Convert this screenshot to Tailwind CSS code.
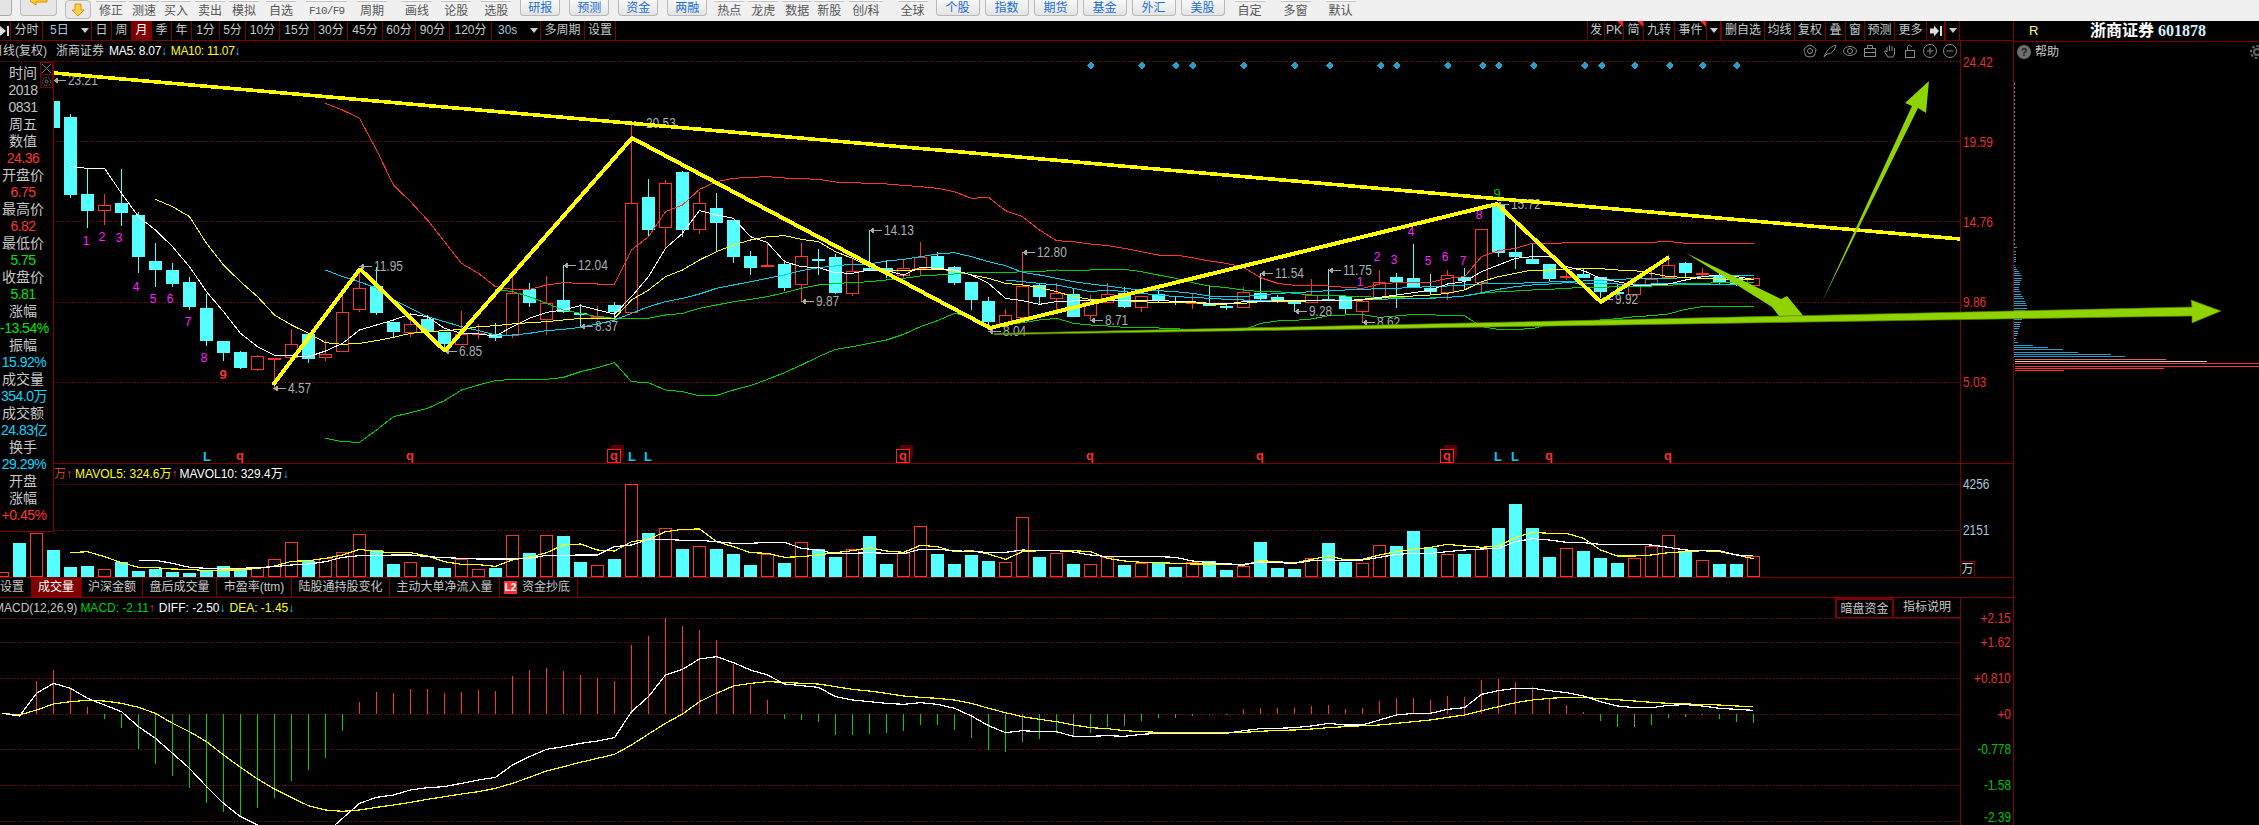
<!DOCTYPE html>
<html lang="zh-CN">
<head>
<meta charset="UTF-8">
<title>浙商证券 601878</title>
<script src="https://cdn.jsdelivr.net/npm/@tailwindcss/browser@4"></script>
</head>
<body class="relative w-[2259px] h-[825px] overflow-hidden bg-black text-[12px] text-[#c8c8c8] font-['Liberation_Sans','Noto_Sans_CJK_SC',sans-serif]">

<!-- top toolbar -->
<div class="flex h-[21px] bg-[#f0f0f0] text-[#555] leading-[23px] overflow-hidden [&>span]:relative [&>span]:before:absolute [&>span]:before:top-0 [&>span]:before:left-[-3px] [&>span]:before:right-[-3px] [&>span]:before:h-[2px] [&>span]:before:bg-[#fafafa] [&>span]:before:border-b [&>span]:before:border-[#c4c4c4]">
  <div class="w-[12px] h-[16px] shrink-0 rounded-br bg-[#e4e4e4] border-r border-b border-[#aaa]"></div>
  <div class="ml-[8px] w-[37px] h-[16px] shrink-0 flex justify-center rounded-b bg-[#e6e6e6] border border-t-0 border-[#bbb]">
    <svg width="18" height="6"><path d="M0 1 L6 5 V2 H17 V-2 H0Z" fill="#ffc92e" stroke="#d98a00"/></svg>
  </div>
  <div class="ml-[8px] w-[26px] h-[19px] shrink-0 flex items-center justify-center rounded bg-[#e9e9e9] border border-[#bbb]">
    <svg width="14" height="14"><path d="M4 1 H10 V7 H13 L7 13 L1 7 H4Z" fill="#ffd24a" stroke="#e09000"/></svg>
  </div>
  <span class="ml-[8px]">修正</span><span class="ml-[9px]">测速</span><span class="ml-[8px]">买入</span><span class="ml-[10px]">卖出</span><span class="ml-[10px]">模拟</span><span class="ml-[13px]">自选</span>
  <span class="ml-[16px] w-[35px] text-[11px] whitespace-nowrap font-['Liberation_Mono',monospace] tracking-[-0.7px]">F10/F9</span>
  <span class="ml-[16px]">周期</span><span class="ml-[21px]">画线</span><span class="ml-[15px]">论股</span><span class="ml-[16px]">选股</span>
  <div class="ml-[12px] w-[40px] h-[16px] text-center leading-[17px] shrink-0 rounded-b bg-gradient-to-b from-[#f8f8f8] to-[#e4e4e4] border border-t-0 border-[#b8b8b8] text-[#1a6fd6]">研报</div>
  <div class="ml-[9px] w-[40px] h-[16px] text-center leading-[17px] shrink-0 rounded-b bg-gradient-to-b from-[#f8f8f8] to-[#e4e4e4] border border-t-0 border-[#b8b8b8] text-[#1a6fd6]">预测</div>
  <div class="ml-[9px] w-[40px] h-[16px] text-center leading-[17px] shrink-0 rounded-b bg-gradient-to-b from-[#f8f8f8] to-[#e4e4e4] border border-t-0 border-[#b8b8b8] text-[#1a6fd6]">资金</div>
  <div class="ml-[9px] w-[40px] h-[16px] text-center leading-[17px] shrink-0 rounded-b bg-gradient-to-b from-[#f8f8f8] to-[#e4e4e4] border border-t-0 border-[#b8b8b8] text-[#1a6fd6]">两融</div>
  <span class="ml-[10px]">热点</span><span class="ml-[10px]">龙虎</span><span class="ml-[10px]">数据</span><span class="ml-[8px]">新股</span><span class="ml-[11px] whitespace-nowrap">创/科</span><span class="ml-[21px]">全球</span>
  <div class="ml-[11px] w-[44px] h-[16px] text-center leading-[17px] shrink-0 rounded-b bg-gradient-to-b from-[#f8f8f8] to-[#e4e4e4] border border-t-0 border-[#b8b8b8] text-[#1a6fd6]">个股</div>
  <div class="ml-[5px] w-[44px] h-[16px] text-center leading-[17px] shrink-0 rounded-b bg-gradient-to-b from-[#f8f8f8] to-[#e4e4e4] border border-t-0 border-[#b8b8b8] text-[#1a6fd6]">指数</div>
  <div class="ml-[5px] w-[44px] h-[16px] text-center leading-[17px] shrink-0 rounded-b bg-gradient-to-b from-[#f8f8f8] to-[#e4e4e4] border border-t-0 border-[#b8b8b8] text-[#1a6fd6]">期货</div>
  <div class="ml-[5px] w-[44px] h-[16px] text-center leading-[17px] shrink-0 rounded-b bg-gradient-to-b from-[#f8f8f8] to-[#e4e4e4] border border-t-0 border-[#b8b8b8] text-[#1a6fd6]">基金</div>
  <div class="ml-[5px] w-[44px] h-[16px] text-center leading-[17px] shrink-0 rounded-b bg-gradient-to-b from-[#f8f8f8] to-[#e4e4e4] border border-t-0 border-[#b8b8b8] text-[#1a6fd6]">外汇</div>
  <div class="ml-[5px] w-[44px] h-[16px] text-center leading-[17px] shrink-0 rounded-b bg-gradient-to-b from-[#f8f8f8] to-[#e4e4e4] border border-t-0 border-[#b8b8b8] text-[#1a6fd6]">美股</div>
  <span class="ml-[13px]">自定</span><span class="ml-[22px]">多窗</span><span class="ml-[21px]">默认</span>
</div>

<div class="flex h-[804px]">
  <!-- chart column -->
  <div class="relative flex flex-col w-[2014px] shrink-0 border-r border-[#800000]">

    <!-- period tabs -->
    <div class="flex justify-between h-[20px] shrink-0 border-b border-[#800000] leading-[19px]">
      <div class="flex">
        <div class="w-[11px] flex items-center border-r border-[#800000]"><svg width="10" height="12"><path d="M0 1 L6 6 L0 11Z" fill="#ddd"/><rect x="7" y="1" width="2" height="10" fill="#ddd"/></svg></div>
        <div class="w-[32px] text-center border-r border-[#800000]">分时</div>
        <div class="w-[49px] flex items-center justify-between pl-[7px] pr-[2px] border-r border-[#800000] text-[#a8c8e0]">5日<svg width="8" height="5"><path d="M0 0 H8 L4 5Z" fill="#ccc"/></svg></div>
        <div class="w-[20px] text-center border-r border-[#800000]">日</div>
        <div class="w-[20px] text-center border-r border-[#800000]">周</div>
        <div class="w-[20px] text-center border-r border-[#800000] bg-[#800000] text-white">月</div>
        <div class="w-[20px] text-center border-r border-[#800000]">季</div>
        <div class="w-[20px] text-center border-r border-[#800000]">年</div>
        <div class="w-[28px] text-center border-r border-[#800000]">1分</div>
        <div class="w-[26px] text-center border-r border-[#800000]">5分</div>
        <div class="w-[34px] text-center border-r border-[#800000]">10分</div>
        <div class="w-[35px] text-center border-r border-[#800000]">15分</div>
        <div class="w-[33px] text-center border-r border-[#800000]">30分</div>
        <div class="w-[35px] text-center border-r border-[#800000]">45分</div>
        <div class="w-[33px] text-center border-r border-[#800000]">60分</div>
        <div class="w-[34px] text-center border-r border-[#800000]">90分</div>
        <div class="w-[42px] text-center border-r border-[#800000]">120分</div>
        <div class="w-[49px] flex items-center justify-between pl-[6px] pr-[2px] border-r border-[#800000] text-[#a8c8e0]">30s<svg width="8" height="5"><path d="M0 0 H8 L4 5Z" fill="#ccc"/></svg></div>
        <div class="w-[44px] text-center border-r border-[#800000]">多周期</div>
        <div class="w-[31px] text-center border-r border-[#800000]">设置</div>
      </div>
      <div class="flex pr-[53px] shrink-0">
        <div class="w-[18px] text-center border-x border-[#800000]">发</div>
        <div class="relative w-[19px] text-center border-r border-[#800000]">PK<span class="absolute top-0 right-0 w-0 h-0 border-t-[6px] border-l-[6px] border-t-[#ff2020] border-l-transparent"></span></div>
        <div class="relative w-[20px] text-center border-r border-[#800000]">简<span class="absolute top-0 right-0 w-0 h-0 border-t-[6px] border-l-[6px] border-t-[#ff2020] border-l-transparent"></span></div>
        <div class="w-[31px] text-center border-r border-[#800000]">九转</div>
        <div class="relative w-[32px] text-center border-r border-[#800000]">事件<span class="absolute top-0 right-0 w-0 h-0 border-t-[6px] border-l-[6px] border-t-[#ff2020] border-l-transparent"></span></div>
        <div class="w-[15px] flex items-center justify-center border-r-2 border-[#800000]"><svg width="8" height="5"><path d="M0 0 H8 L4 5Z" fill="#ccc"/></svg></div>
        <div class="w-[43px] text-center border-r border-[#800000] whitespace-nowrap">删自选</div>
        <div class="w-[30px] text-center border-r border-[#800000]">均线</div>
        <div class="w-[31px] text-center border-r border-[#800000]">复权</div>
        <div class="w-[20px] text-center border-r border-[#800000]">叠</div>
        <div class="w-[19px] text-center border-r border-[#800000]">窗</div>
        <div class="w-[30px] text-center border-r border-[#800000]">预测</div>
        <div class="w-[32px] text-center border-r border-[#800000]">更多</div>
        <div class="w-[18px] flex items-center justify-center border-r border-[#800000]"><svg width="12" height="12"><path d="M0 3.5 H4 V0.5 L9 6 L4 11.5 V8.5 H0Z" fill="#ddd"/><rect x="10" y="1" width="2" height="10" fill="#ddd"/></svg></div>
        <div class="w-[15px] flex items-center justify-center border-x border-[#800000]"><svg width="8" height="5"><path d="M0 0 H8 L4 5Z" fill="#ccc"/></svg></div>
      </div>
    </div>

    <!-- price pane -->
    <div class="relative h-[423px] shrink-0 border-b border-[#800000]">
      <svg id="price" class="absolute top-0 left-0" width="2013" height="422" viewBox="0 41 2013 422" font-size="13"></svg>
      <div class="absolute top-0 bottom-0 left-[1960px] w-px bg-[#800000]"></div>
      <div class="relative flex items-center justify-between w-[1960px] h-[20px] whitespace-nowrap">
        <div class="flex overflow-hidden">
          <span class="ml-[-9px]">月线(复权)</span>
          <span class="ml-[9px]">浙商证券</span>
          <span class="ml-[5px] text-white tracking-[-0.3px]">MA5: 8.07<span class="text-[#00c8ff]">↓</span></span>
          <span class="ml-[4px] text-[#ffff00] tracking-[-0.3px]">MA10: 11.07<span class="text-[#00c8ff]">↓</span></span>
        </div>
        <div class="flex gap-[6px] pr-[3px]">
          <svg width="14" height="14" fill="none" stroke="#8a8a8a"><circle cx="7" cy="7" r="2.5"/><path d="M7 1 L10 2.5 L13 5 L12.5 8.5 L11 12 L7 13 L3 12 L1.5 8.5 L1 5 L4 2.5Z"/></svg>
          <svg width="14" height="14" fill="none" stroke="#8a8a8a"><path d="M1 13 C3 8 6 3 13 1 C12 6 9 10 4 10 L1 13"/></svg>
          <svg width="14" height="14" fill="none" stroke="#8a8a8a"><ellipse cx="7" cy="7" rx="6.5" ry="4.5"/><circle cx="7" cy="7" r="2.5"/></svg>
          <svg width="14" height="14" fill="none" stroke="#8a8a8a"><rect x="1.5" y="4.5" width="11" height="8"/><path d="M4.5 4.5 V1.5 H9.5 V4.5 M1.5 8.5 H12.5"/></svg>
          <svg width="14" height="14" fill="none" stroke="#8a8a8a"><path d="M4 8 V3 M6.5 7 V1 M9 7 V2 M11.5 8 V4 M4 8 L2 6.5 L1.5 8 L5 13 H10 L11.5 10 V8"/></svg>
          <svg width="14" height="14" fill="none" stroke="#8a8a8a"><rect x="2.5" y="6.5" width="9" height="7"/><path d="M4.5 6.5 V3 C4.5 0.5 8.5 0.5 8.5 3"/></svg>
          <svg width="14" height="14" fill="none" stroke="#8a8a8a"><circle cx="7" cy="7" r="6.5"/><path d="M3.5 7 H10.5 M7 3.5 V10.5"/></svg>
          <svg width="14" height="14" fill="none" stroke="#8a8a8a"><circle cx="7" cy="7" r="6.5"/><path d="M3.5 7 H10.5"/></svg>
        </div>
      </div>
    </div>

    <!-- volume pane -->
    <div class="relative h-[114px] shrink-0 border-b border-[#800000]">
      <svg id="vol" class="absolute top-0 left-0" width="2013" height="113" viewBox="0 464 2013 113" font-size="13"></svg>
      <div class="absolute top-0 bottom-0 left-[1960px] w-px bg-[#800000]"></div>
      <div class="absolute bottom-0 left-[1960px] w-[15px] h-[16px] leading-[15px] text-center border border-b-0 border-[#800000] bg-black">万</div>
      <div class="relative flex h-[19px] items-center pl-[54px] whitespace-nowrap">
        <span class="text-[#d04020]">万<span class="text-[#ff3232]">↑</span></span>
        <span class="ml-[3px] text-[#ffff00]">MAVOL5: 324.6万<span class="text-[#ff3232]">↑</span></span>
        <span class="ml-[2px] text-white">MAVOL10: 329.4万<span class="text-[#00c8ff]">↓</span></span>
      </div>
    </div>

    <!-- indicator tabs -->
    <div class="flex h-[20px] shrink-0 border-b border-[#800000] leading-[19px] whitespace-nowrap">
      <div class="w-[31px] text-right pr-[7px] overflow-hidden">设置</div>
      <div class="w-[51px] text-center bg-[#800000] text-white border-r border-[#800000]">成交量</div>
      <div class="w-[61px] text-center border-r border-[#800000]">沪深金额</div>
      <div class="w-[74px] text-center border-r border-[#800000]">盘后成交量</div>
      <div class="w-[75px] text-center border-r border-[#800000]">市盈率(ttm)</div>
      <div class="w-[98px] text-center border-r border-[#800000]">陆股通持股变化</div>
      <div class="w-[110px] text-center border-r border-[#800000]">主动大单净流入量</div>
      <div class="w-[78px] flex items-center pl-[4px] gap-[5px] border-r border-[#800000]"><span class="w-[13px] h-[13px] leading-[13px] text-center text-[10px] bg-[#ff3030] text-white font-bold">L2</span>资金抄底</div>
    </div>

    <!-- macd pane -->
    <div class="relative flex-1">
      <svg id="macd" class="absolute top-0 left-0" width="2013" height="227" viewBox="0 598 2013 227" font-size="13"></svg>
      <div class="absolute top-0 bottom-0 left-[1960px] w-px bg-[#800000]"></div>
      <div class="relative flex items-center justify-between w-[1960px] h-[20px] whitespace-nowrap overflow-hidden">
        <div class="flex">
          <span class="ml-[-6px] text-[#c8c8c8]">MACD(12,26,9)</span>
          <span class="ml-[3px] text-[#00d000]">MACD: -2.11<span class="text-[#ff3232]">↑</span></span>
          <span class="ml-[4px] text-white">DIFF: -2.50<span class="text-[#00c8ff]">↓</span></span>
          <span class="ml-[4px] text-[#ffff00]">DEA: -1.45<span class="text-[#00c8ff]">↓</span></span>
        </div>
        <div class="flex h-[20px] leading-[19px]">
          <div class="w-[59px] text-center border-2 border-b border-[#800000]">暗盘资金</div>
          <div class="w-[66px] text-center border-b border-[#800000]">指标说明</div>
        </div>
      </div>
    </div>

    <!-- quote panel over the chart -->
    <div class="absolute top-[41px] left-0 w-[54px] h-[470px] pt-[3px] bg-black border-r border-b border-[#800000] leading-[17px] text-center whitespace-nowrap text-[14px]">
      <div class="w-[46px]">时间</div>
      <div class="w-[46px] tracking-[-0.5px] text-[#c0c0c0]">2018</div>
      <div class="w-[46px] tracking-[-0.5px] text-[#c0c0c0]">0831</div>
      <div class="w-[46px]">周五</div>
      <div class="w-[46px]">数值</div>
      <div class="w-[46px] tracking-[-0.5px] text-[#ff3232]">24.36</div>
      <div class="w-[46px]">开盘价</div>
      <div class="w-[46px] tracking-[-0.5px] text-[#ff3232]">6.75</div>
      <div class="w-[46px]">最高价</div>
      <div class="w-[46px] tracking-[-0.5px] text-[#ff3232]">6.82</div>
      <div class="w-[46px]">最低价</div>
      <div class="w-[46px] tracking-[-0.5px] text-[#00e600]">5.75</div>
      <div class="w-[46px]">收盘价</div>
      <div class="w-[46px] tracking-[-0.5px] text-[#00e600]">5.81</div>
      <div class="w-[46px]">涨幅</div>
      <div class="w-[48px] tracking-[-0.5px] text-[#00e600]">-13.54%</div>
      <div class="w-[46px]">振幅</div>
      <div class="w-[48px] tracking-[-0.5px] text-[#00d8ff]">15.92%</div>
      <div class="w-[46px]">成交量</div>
      <div class="w-[48px] tracking-[-0.5px] text-[#00d8ff]">354.0万</div>
      <div class="w-[46px]">成交额</div>
      <div class="w-[48px] tracking-[-0.5px] text-[#00d8ff]">24.83亿</div>
      <div class="w-[46px]">换手</div>
      <div class="w-[48px] tracking-[-0.5px] text-[#00d8ff]">29.29%</div>
      <div class="w-[46px]">开盘</div>
      <div class="w-[46px]">涨幅</div>
      <div class="w-[48px] tracking-[-0.5px] text-[#ff3232]">+0.45%</div>
      <div class="absolute top-0 right-0 flex flex-col">
        <div class="w-[13px] h-[13px] flex items-center justify-center border border-[#800000]"><svg width="9" height="9"><path d="M0 0 L9 9 M9 0 L0 9" stroke="#777"/></svg></div>
        <div class="w-[13px] h-[13px] flex items-center justify-center border border-t-0 border-[#800000]"><svg width="9" height="9" fill="none" stroke="#777"><circle cx="4.5" cy="4.5" r="1.5"/><circle cx="4.5" cy="4.5" r="4" stroke-dasharray="1.5 1"/></svg></div>
      </div>
    </div>
  </div>

  <!-- right panel -->
  <div class="relative flex-1 min-w-0 overflow-hidden">
    <div class="flex items-center h-[21px] border-b border-[#800000] whitespace-nowrap">
      <span class="ml-[15px] w-[61px] text-[#ffff80] text-[13px]">R</span>
      <span class="text-white font-bold text-[16px] leading-[20px] font-['Liberation_Serif','Noto_Sans_CJK_SC',serif]">浙商证券 <span class="text-[#d8f0ff]">601878</span></span>
    </div>
    <div class="flex items-center justify-between h-[20px] pl-[3px] pr-0">
      <div class="flex items-center gap-[4px]">
        <span class="w-[14px] h-[14px] rounded-full bg-[#6e6e6e] text-[#222] text-[11px] leading-[14px] text-center font-bold">?</span>
        帮助
      </div>
      <svg class="mr-[-6px]" width="16" height="16" fill="none" stroke="#666" stroke-width="2"><circle cx="8" cy="8" r="3"/><circle cx="8" cy="8" r="6" stroke-dasharray="2.5 2"/></svg>
    </div>
    <svg id="depth" class="absolute top-0 left-0" width="245" height="804" viewBox="2014 21 245 804"></svg>
  </div>
</div>

<!-- hand-drawn lines on top of the whole window -->
<svg class="absolute top-0 left-0 pointer-events-none" width="2259" height="825" viewBox="0 0 2259 825" fill="none">
  <path d="M54 73 L1960 239" stroke="#ffff00" stroke-width="3.6" shape-rendering="crispEdges"/>
  <path d="M273 385 L360 269 L445 351 L632 138 L990 328 L1497 204 L1601 302 L1669 257" stroke="#ffff00" stroke-width="4" stroke-linejoin="bevel" shape-rendering="crispEdges"/>
  <path d="M1686 253 L1781 299 L1787 296 L1806 319 L1779 316 L1772 307Z" fill="#8fd400"/>
  <path d="M994 333.5 L2192 307 L2191 300 L2221 311 L2192 323 L2192 316 L994 334.7Z" fill="#8fd400" stroke="#557f00" stroke-width="0.7"/>
  <path d="M1822 302 L1918 108 L1926 113 L1929 81 L1905 103 L1912 106Z" fill="#8fd400"/>
</svg>

<script>
  // x position of candle i
  const X = i => Math.floor(70.4 + 17 * i) + 0.5;
  const cyan = '#55ffff', red = '#ff3232', grid = '#a00000';

  // zoom readings: value v at offset off means page y = off + v / 3
  const S = (start, off, ys) => ys.map((v, k) => [X(start + k), off + v / 3]);
  const poly = (pts, color, w = 1) =>
    `<polyline points="${pts.map(p => p.join(',')).join(' ')}" fill="none" stroke="${color}" stroke-width="${w}"/>`;
  const dots = (y, x0 = 0) => `<line x1="${x0}" y1="${y + .5}" x2="1960" y2="${y + .5}" stroke="${grid}" stroke-dasharray="1 2"/>`;
  const txt = (x, y, s, fill, extra = '') => `<text x="${x}" y="${y}" fill="${fill}" dominant-baseline="central" ${extra}>${s}</text>`;
  // the terminal's numbers are tall and narrow: 14px squeezed to 85% width
  const numWidth = s => [...s].reduce((a, c) => a + (/\d/.test(c) ? 7.8 : c == '+' ? 8.2 : 4.2), 0) * 0.85;
  const num = (x, y, s, fill) =>
    txt(0, 0, s, fill, `font-size="14" transform="translate(${x} ${y}) scale(.85 1)"`);

  // [kind, top, bottom, wickTop, wickBottom], from i = -1
  const candles = [
    'c,101,128,101,128','c,117,195,114,198','c,194,211,168,228','r,205,210,194,225','c,203,213,169,226','c,215,257,212,273',
    'c,261,270,243,287','c,270,284,263,287','c,282,307,277,310','c,308,341,294,346','c,341,353,341,361','c,352,368,351,369',
    'r,356,369,355,371','r,358,359,358,390','r,344,357,329,357','c,334,359,334,363','r,354,357,340,361','r,312,351,290,351',
    'r,288,309,273,312','c,286,313,267,315','c,322,332,322,338','r,324,332,317,337','c,319,332,315,332','c,332,344,332,351',
    'r,334,344,311,344','r,333,334,324,339','c,334,338,323,341',
    'r,293,335,277,338','c,289,303,283,307','r,303,319,276,335','c,300,312,265,313','c,313,315,304,328','r,316,318,306,320',
    'c,305,312,302,318','r,203,312,125,312','c,197,230,179,237','r,183,227,180,248','c,172,230,171,237','r,203,229,192,234',
    'c,208,223,193,251','c,220,257,220,263','c,256,268,251,275','r,265,266,243,266','c,264,288,260,291','r,256,284,243,301',
    'c,259,260,249,275','c,257,293,254,294','r,271,293,259,296','c,268,271,230,271','c,268,272,261,278','r,268,275,260,278',
    'r,257,268,242,276','c,256,270,252,270','c,267,283,266,285','c,282,300,282,310','c,301,322,297,330','r,315,323,309,323',
    'r,286,317,252,317','c,285,297,283,304','r,293,298,283,313','c,294,317,288,317','r,302,315,295,320',
    'r,294,302,283,303','c,293,307,287,308','r,296,307,296,312','c,294,300,289,303','c,301,303,297,305','r,302,303,294,309',
    'c,303,306,286,306','c,306,308,304,310','r,292,307,287,307','c,293,299,274,300','c,297,302,295,303','c,302,303,302,312',
    'r,295,302,279,302','c,299,301,269,301','c,296,309,296,315','r,301,311,300,323','r,282,299,270,300','c,277,282,273,308',
    'c,278,287,244,288','c,288,292,274,295','r,275,292,270,300','c,277,281,268,290','r,229,282,229,292','c,204,253,203,257',
    'c,252,257,224,269','c,259,264,244,264','c,264,279,264,282','r,276,277,270,280','c,274,278,269,278','c,277,292,277,298',
    'c,292,293,283,295','r,286,294,282,294','r,279,285,270,287','r,265,277,255,278','c,263,273,262,277','r,273,274,268,277',
    'c,275,282,273,284','c,278,284,278,286','r,278,285,277,285'
  ].map(s => s.split(','));

  let p = '';
  [61, 141, 221, 302, 382].forEach(y => p += dots(y));
  candles.forEach((c, k) => {
    const x = X(k - 1), col = c[0] == 'c' ? cyan : red;
    const [t, b, wt, wb] = c.slice(1).map(Number);
    p += `<line x1="${x}" y1="${wt}" x2="${x}" y2="${wb}" stroke="${col}"/>`;
    if (b - t <= 2) p += `<rect x="${x - 6.5}" y="${t}" width="13" height="2" fill="${col}"/>`;
    else if (c[0] == 'c') p += `<rect x="${x - 6.5}" y="${t}" width="13" height="${b - t}" fill="${col}"/>`;
    else p += `<rect x="${x - 6}" y="${t + .5}" width="12" height="${b - t}" fill="#000" stroke="${col}"/>`;
  });

  // moving averages and bands
  p += poly([...S(15, 60, [130,150,175,270,375,425,480,545,610,640,680]),
    ...S(26, 100, [568,568,555,548,550,552,552,450,410,335,315,268,245,235,232,230,234,236,238,246,248,250,252,256,260,265,275,295,292,332,350,390,422,425,432]),
    ...S(61, 180, [197,205,215,225,225,233,243,250,262,293,310,316,316,318,322,325,312,308,308,307,295,290,230,212,205,190,192,188,188,188,188,188,187,184,190,190,190,190,190])], red);
  p += poly([...S(15, 60, [1135,1145,1147,1110,1070,1058,1045,1022,990,975,962]),
    ...S(26, 100, [838,838,838,832,815,803,788,845,848,870,875,888,886,870,857,838,818,795,770,748,740,730,720,703,680,662,640,650,682,675,668,660,655,670,675]),
    ...S(61, 180, [438,442,442,444,446,450,452,452,450,430,423,421,417,407,405,404,412,408,403,404,407,407,440,448,448,446,432,430,428,420,416,410,407,402,388,380,380,380,380])], '#00d000');
  p += poly([...S(25, 100, [568,575,590,610,630,640,650,655,655,655,645,640,625,615,605,598,590,578,565,555,550,548,545,540,535,528,525,522,518,518,518,515,515,510,512,510]),
    ...S(61, 180, [268,268,275,285,295,308,318,323,330,335,335,340,345,345,348,350,352,353,355,354,352,348,340,335,333,330,328,325,322,322,320,318,318,316,312,310,308,308,308])], '#00d000');
  p += poly([...S(15, 60, [630,650,665,685,720,745,770,785,800,812,825]),
    ...S(26, 100, [705,700,692,688,682,672,660,640,620,605,595,582,565,555,545,535,525,512,503,498,492,492,483,478,470,462,458,470,485,497,517,525,535,545,552]),
    ...S(61, 180, [318,325,330,332,335,340,348,350,350,345,340,338,335,332,330,328,326,325,322,320,318,315,312,310,310,308,306,305,303,302,298,296,296,295,293,290,287,286,286])], '#00d0f0');
  p += poly([...S(55, 100, [540,545,550,555,565,575]),
    ...S(61, 180, [330,335,340,345,350,352,355,358,360,360,360,360,360,360,360,360,358,356,355,355,352,348,338,328,320,315,312,308,310,310,312,312,312,310,312,312,312,314,316])], '#00d0f0');
  p += poly([...S(5, 60, [418,440,470,550,615,665,710,765,795,820,848,853,850,842,832,820,815,812,808,800,797]),
    ...S(26, 100, [672,668,665,660,655,655,655,600,570,530,510,480,455,435,420,410,407,418,425,455,475,500,512,512,508,508,512,525,535,550,555,562,575,590,598]),
    ...S(61, 180, [360,362,365,368,368,368,372,372,370,365,365,365,362,362,362,360,355,348,348,345,340,330,305,290,280,270,270,268,265,266,270,272,280,290,292,295,298,298,300])], '#ffff00');
  p += poly([...S(0, 60, [320,325,325,400,470,510,560,620,695,755,820,860,886,887,890,873,850,810,795,780,762,770,805,820,822,828]),
    ...S(26, 100, [680,655,637,630,617,630,642,590,530,445,400,332,345,355,410,428,485,500,503,518,520,510,512,525,502,505,510,525,550,595,602,613,605,603,600]),
    ...S(61, 180, [360,362,362,360,365,365,370,372,365,365,362,362,362,362,362,358,352,345,338,330,312,305,275,255,235,230,230,260,272,295,305,316,315,312,300,290,285,290,298])], '#ffffff');

  // high / low price tags with arrows
  [[54,80,'23.21'],[274,388,'4.57'],[360,266,'11.95'],[445,351,'6.85'],[632,123,'20.53'],[564,265,'12.04'],[581,326,'8.37'],
   [870,230,'14.13'],[802,301,'9.87'],[1023,252,'12.80'],[989,331,'8.04'],[1091,320,'8.71'],[1261,273,'11.54'],[1329,270,'11.75'],
   [1295,311,'9.28'],[1363,322,'8.62'],[1497,204,'15.72'],[1601,299,'9.92']].forEach(([x, y, s]) => {
    p += `<path d="M${x} ${y + .5} H${x + 12} M${x} ${y + .5} L${x + 3} ${y - 1.5} V${y + 2.5}Z" stroke="#a8a8a8" fill="#a8a8a8"/>`;
    p += num(x + 14, y, s, '#a8aeb4');
  });

  // nine-turn counts
  [[86,241,'1'],[102,237,'2'],[119,238,'3'],[136,287,'4'],[153,299,'5'],[170,299,'6'],[188,322,'7'],[204,358,'8'],
   [1360,282,'1'],[1377,257,'2'],[1394,260,'3'],[1411,232,'4'],[1428,261,'5'],[1445,257,'6'],[1463,261,'7'],[1479,215,'8']]
    .forEach(([x, y, s]) => p += txt(x, y, s, '#ff20ff', 'text-anchor="middle" font-size="12"'));
  p += txt(223, 374, '9', '#ff3232', 'text-anchor="middle" font-weight="bold"');
  p += txt(1497, 193, '9', '#00c000', 'text-anchor="middle"');

  // L / q signals along the bottom of the pane
  [207,632,648,1498,1515].forEach(x => p += txt(x, 456, 'L', '#00c8f0', 'text-anchor="middle" font-weight="bold"'));
  [240,410,1090,1260,1549,1668].forEach(x => p += txt(x, 455, 'q', '#f03030', 'text-anchor="middle" font-weight="bold"'));
  [614,903,1447].forEach(x => {
    p += `<rect x="${x - 3}" y="445" width="13" height="13" fill="#5a0000"/><rect x="${x - 6.5}" y="449.5" width="13" height="13" fill="#000" stroke="#ff2020"/>`;
    p += txt(x, 455, 'q', '#f03030', 'text-anchor="middle" font-weight="bold"');
  });

  // event diamonds
  [1091,1142,1176,1193,1244,1295,1330,1381,1397,1448,1483,1499,1534,1585,1602,1635,1670,1703,1737]
    .forEach(x => p += `<path d="M${x} 61 L${x + 3.5} 65.5 L${x} 70 L${x - 3.5} 65.5Z" fill="#2a9cc8"/>`);

  // price axis
  [[62,'24.42'],[142,'19.59'],[222,'14.76'],[302,'9.86'],[382,'5.03']].forEach(([y, s]) => p += num(1963, y, s, '#e03030'));
  document.getElementById('price').innerHTML = `<g shape-rendering="crispEdges">${p}</g>`;

  // volume pane: negative = red outline, positive = cyan fill
  let v = dots(484) + dots(530);
  const volBar = (i, top) => {
    const x = X(i);
    v += top < 0
      ? `<rect x="${x - 6}" y="${-top + .5}" width="12" height="${577 + top - 1}" fill="#000" stroke="${red}"/>`
      : `<rect x="${x - 6.5}" y="${top}" width="13" height="${577 - top}" fill="${cyan}"/>`;
  };
  [-395,310,-278,330,381,378,-388,366,393,386,396,399,393,378,384,-381,-358,-307,362,-355,-335,-283,330,372,-367,381,384,-358,-388,384,-286,339,-286,288,366,-376,357,-133,279,-265,327,-319]
    .forEach((t, k) => volBar(k - 4, t < 0 ? -(440 - t / 3) : 440 + t / 3));
  [267,282,315,-283,309,-247,267,291,-268,228,312,-279,-199,282,312,285,303,-307,-172,291,-280,312,-313,-291,315,-309,306,321,-306,303,330,-317,246,324,327,-295,249,306,-310,-256,258,213,264,-281,282,-268,204,132,204,291,-265,273,294,309,-295,-259,-226,274,-300,312,312,-289]
    .forEach((t, k) => volBar(k + 38, t < 0 ? -(460 - t / 3) : 460 + t / 3));
  v += poly([...S(0, 440, [338,335,350,368,382,383,387,388,392,390,390,385,378,364,362,355,345,328,335,338,338,348,365,373,374,379,360,352,338,315,312,330,333,305,298,275,268]),
    ...S(37, 460, [207,245,260,278,280,292,290,285,278,272,263,273,277,256,260,275,272,282,298,275,272,272,272,275,295,303,307,308,310,312,312,312,316,302,305,309,298,288,300,298,285,275,268,262,253,258,262,258,232,217,220,220,235,270,288,288,285,278,275,272,275,285,296])], '#ffff00', 1.2);
  v += poly([...S(4, 440, [361,361,370,382,385,385,385,383,380,375,372,365,352,347,347,345,345,350,353,355,357,357,357,355,346,346,345,345,320,315,298,298,301]),
    ...S(37, 460, [241,245,250,250,247,247,265,270,281,280,278,280,281,268,268,272,275,277,277,270,272,272,276,285,290,290,290,290,292,303,308,312,313,306,308,310,302,300,301,300,292,283,280,280,275,270,267,265,245,236,240,247,248,253,253,253,255,262,270,272,272,285,287])], '#ffffff', 1.2);
  v += num(1963, 484, '4256', '#a8c4dc') + num(1963, 530, '2151', '#a8c4dc');
  document.getElementById('vol').innerHTML = `<g shape-rendering="crispEdges">${v}</g>`;

  // macd pane
  let m = '';
  [618,642,678,714,749,785,821].forEach(y => m += dots(y));
  const macdBar = (i, y, gray) => {
    m += `<line x1="${X(i)}" y1="714" x2="${X(i)}" y2="${y}" stroke="${gray ? '#808080' : y < 714 ? red : '#00d000'}"/>`;
  };
  [723,690,745,800,836,863,926,971,1007,1043,1088,1115,1128,1103,1073,1022,989,953,872,785,755,758,747,747,758,755,750,753,708,690,684,693,705,714,723,615,588,534,558]
    .forEach((t, k) => macdBar(k - 2, 440 + t / 3));
  macdBar(37, 630);
  const grayBars = [53,56,59,62,65,92];
  [540,612,675,720,778,780,786,825,825,822,820,813,795,795,810,834,870,876,846,838,820,828,820,800,798,783,773,773,767,766,766,747,744,744,744,738,735,747,744,723,714,714,720,708,711,660,657,666,680,717,735,755,783,800,800,795,773,770,764,777,785,789]
    .forEach((t, k) => macdBar(k + 38, 460 + t / 3, grayBars.includes(k + 38)));
  m += poly([...S(-4, 440, [820,825,810,792,785,781,783,790,802,820,850,875,905,945,982,1017,1047,1073,1097,1110,1114,1110,1102,1095,1087,1078,1070,1062,1055,1045,1030,1012,993,980,967,955,943,915,882,850,822]),
    ...S(37, 460, [725,700,678,670,665,667,670,672,680,688,693,700,708,712,715,720,730,745,758,770,778,785,795,803,806,812,815,817,818,818,818,818,817,814,811,810,807,803,800,797,795,790,785,780,772,765,752,740,728,720,715,712,712,716,719,723,727,730,732,733,735,738,740])], '#ffff00', 1.2);
  m += poly([...S(-4, 440, [820,828,760,730,745,775,795,815,860,895,940,985,1040,1090,1130,1155,1200,1220,1210,1180,1135,1090,1072,1065,1050,1043,1040,1030,1020,1012,975,950,928,920,910,903,893,815,770,705,688]),
    ...S(37, 460, [597,590,608,630,645,672,677,682,710,720,725,730,733,728,733,745,768,797,818,812,815,815,829,829,827,829,823,820,820,820,820,820,812,806,805,803,798,790,795,795,780,765,760,760,748,743,703,692,685,685,692,698,708,725,738,743,743,736,734,738,745,748,751])], '#ffffff', 1.2);
  [[618,'+2.15','#e03030'],[642,'+1.62','#e03030'],[678,'+0.810','#e03030'],[714,'+0','#e03030'],[749,'-0.778','#00c000'],[785,'-1.58','#00c000'],[817,'-2.39','#00c000']]
    .forEach(([y, s, c]) => m += num(2011 - numWidth(s), y, s, c));
  document.getElementById('macd').innerHTML = `<g shape-rendering="crispEdges">${m}</g>`;

  // chip distribution on the right
  let d = '<line x1="2014.5" y1="83" x2="2014.5" y2="245" stroke="#2a9cc8" stroke-dasharray="2 2"/>';
  [[142,350],[152,348],[162,348],[172,348],[178,348],[184,348],[194,345],[200,349],[206,351],[214,357],[220,360],[226,363],[235,366],[241,363],[247,360],[253,360],[262,357],[268,357],[274,360],[283,363],[289,369],[295,372],[304,375],[310,378],[316,381],[325,381],[331,375],[337,370],[358,366],[367,363],[373,360],[379,360],[385,357],[394,354],[400,354],[406,351],[415,348],[421,345],[427,354],[436,399],[442,444],[448,489],[457,534],[463,633],[469,675]]
    .forEach(([y, e]) => d += `<rect x="2014" y="${Math.round(200 + y / 3)}" width="${Math.round(1900 + e / 3 - 2014)}" height="1" fill="#2a9cc8"/>`);
  [[478,798,'#e06060'],[484,921,'#c8c8c8'],[490,1077,'#ff3232'],[499,1077,'#ff3232'],[505,792,'#ff3232'],[511,492,'#ff3232']]
    .forEach(([y, e, c]) => d += `<rect x="2015" y="${Math.round(200 + y / 3)}" width="${Math.round(1900 + e / 3 - 2015)}" height="1" fill="${c}"/>`);
  document.getElementById('depth').innerHTML = `<g shape-rendering="crispEdges">${d}</g>`;
</script>
</body>
</html>
